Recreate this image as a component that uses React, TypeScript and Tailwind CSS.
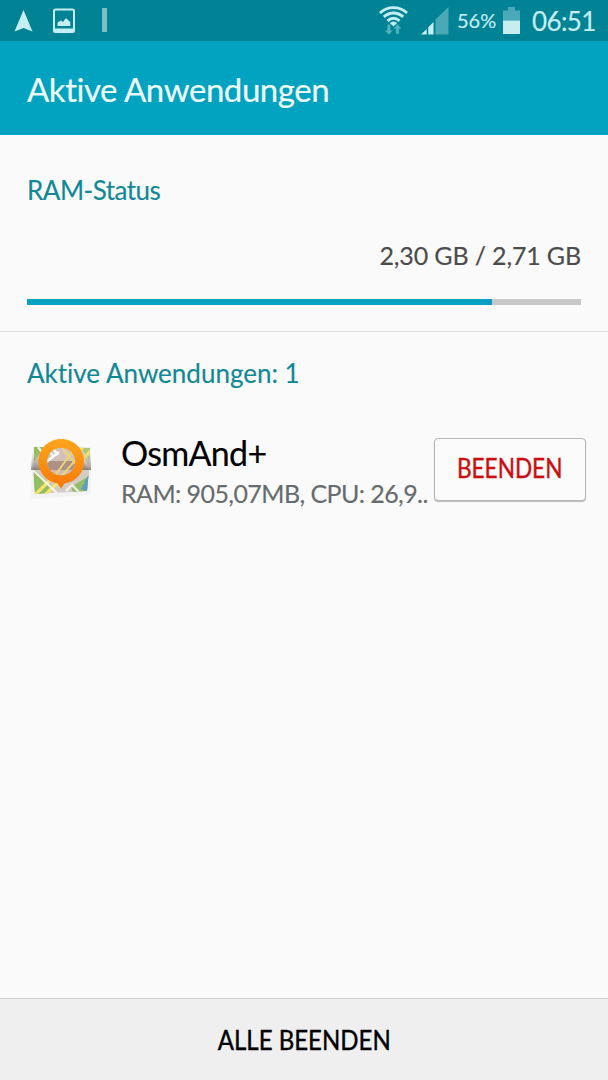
import * as React from 'react';

const WifiIcon: React.FC = () => (
  <svg width="30" height="32" viewBox="0 0 30 32" fill="none">
    <g stroke="#c5eef2" strokeWidth="2.8">
      <path d="M1 8C8.5 0.9 20.5 0.9 28 8" />
      <path d="M4.8 11.9C10.5 6.7 18.5 6.7 24.2 11.9" />
      <path d="M8.5 15.9C12.3 12.5 16.7 12.5 20.5 15.9" />
    </g>
    <path d="M10.8 18C13.2 15.9 15.8 15.9 18.2 18L14.5 21.5Z" fill="#c5eef2" />
    <path d="M8.4 19.5h3v6h2.3L9.9 29.8 6 25.5h2.4zM16.9 28.7h3.2v-5h2.3L18.5 19l-3.9 4.7h2.3z" fill="#4fb0bd" />
  </svg>
);

const SignalIcon: React.FC = () => (
  <svg width="28" height="28" viewBox="0 0 28 28">
    <path d="M14.5 12.5L27.5 0V27.5H14.5z" fill="#4aa9b7" />
    <path d="M0 27.5L5.7 22V27.5zM7.3 20.3L12.5 15V27.5H7.3z" fill="#c5eef2" />
  </svg>
);

const BatteryIcon: React.FC = () => (
  <svg width="18" height="28" viewBox="0 0 18 28">
    <path d="M5 0h7v3.5h5v10H0v-10h5z" fill="#4aa9b7" />
    <path d="M0 13.5h17V27H0z" fill="#c8edef" />
  </svg>
);

const AppIcon: React.FC = () => (
  <svg width="64" height="64" viewBox="0 0 64 64">
    <defs>
      <linearGradient id="pin" x1="0" y1="0" x2="0" y2="1">
        <stop offset="0" stopColor="#ffa51c" />
        <stop offset="1" stopColor="#f67808" />
      </linearGradient>
      <linearGradient id="fold" x1="0" y1="0" x2="0" y2="1">
        <stop offset="0" stopColor="#d9cfc8" stopOpacity="0" />
        <stop offset="1" stopColor="#766b65" stopOpacity="0.8" />
      </linearGradient>
      <clipPath id="sheet">
        <path d="M4 10L60 11 59 33 57 54 5 57 3 34z" />
      </clipPath>
      <clipPath id="hole">
        <ellipse cx="31.2" cy="24.5" rx="14" ry="13.8" />
      </clipPath>
    </defs>
    <path d="M3 9L61 10 61 34 61 58 1 62 2 33z" fill="#f3f3f1" />
    <g clipPath="url(#sheet)">
      <path d="M0 8h64v52H0z" fill="#d3cbc4" />
      <path d="M4 10h10L4 25zM4 32l18 17-8 8H4zM41 50l18-11v17l-15 1z" fill="#93bd62" />
      <path d="M51 52l8-15v18z" fill="#5d9ccb" />
      <path d="M51 10h10v17z" fill="#a9c77a" />
      <path d="M3 60L56 7M15 58L63 12" stroke="#f4e36c" strokeWidth="3.4" />
      <path d="M3 33l25 24M36 54l6-6 9 9M8 10l12 16M42 8l18 24" stroke="#f5f3ee" strokeWidth="2.2" fill="none" />
    </g>
    <path d="M2 15h59v18H1z" fill="url(#fold)" />
    <path
      d="M31.2 2C18.5 2 8.5 12 8.5 24.3 8.5 36.5 17 45 27.5 46.5L31.2 51.5 34.5 46.5C46 45 54 36 54 24.3 54 12 44 2 31.2 2z"
      fill="url(#pin)"
    />
    <g clipPath="url(#hole)">
      <path d="M16 10h31v30H16z" fill="#d3c1b9" />
      <path d="M16 24h31v9H16z" fill="#ad9288" />
      <path d="M16 33h31v7H16z" fill="#d2b9b1" />
      <path d="M24 40L44 12M30 41L49 19M32 11l17 20" stroke="#edd96b" strokeWidth="1.8" />
      <path d="M15 26l14-11M23 12l5 6M19 14l5 6" stroke="#fff" strokeWidth="2.4" />
    </g>
  </svg>
);

const StatusBar: React.FC = () => (
  <div className="flex h-[41px] items-center bg-[#028395] text-[#c5eef2]">
    <svg className="ml-3.5" width="19" height="24" viewBox="0 0 19 24">
      <path d="M9.5 1L18.5 22.5 9.5 19 0.5 22.5z" fill="#c5eef2" />
    </svg>
    <svg className="ml-5" width="22" height="26" viewBox="0 0 22 26">
      <rect x="1" y="1.5" width="20" height="22.5" rx="1.5" stroke="#c5eef2" strokeWidth="2" fill="none" />
      <path d="M1 20.5h20v3.5H1zM4.5 18v-3.5l3.5-2 2 1.5 3-4 2 2 2.3 2V18z" fill="#c5eef2" />
    </svg>
    <div className="mb-0.5 ml-[27px] h-6 w-[5px] bg-[#80bcc5]" />
    <div className="ml-auto flex h-full items-center">
      <WifiIcon />
      <div className="ml-3"><SignalIcon /></div>
      <span className="mb-0.5 ml-2 w-[46px] text-[20px]">56%</span>
      <BatteryIcon />
      <span className="mt-0.5 ml-[11px] w-[76px] text-[26px] tracking-[-0.6px]">06:51</span>
    </div>
  </div>
);

interface RunningApp {
  name: string;
  usage: string;
}

const AppRow: React.FC<{ app: RunningApp }> = ({ app }) => (
  <div className="flex h-[82px] items-center pr-[22px] pl-[30px]">
    <AppIcon />
    <div className="mt-2 ml-[27px] w-[313px] whitespace-nowrap">
      <p className="text-[34px] leading-10 tracking-[-0.7px] text-black">{app.name}</p>
      <p className="text-[25px] leading-10 tracking-[-0.58px] text-[#666b6e]">{app.usage}</p>
    </div>
    <button className="h-[63px] w-[152px] rounded border border-[#b5b5b5] bg-[#fbfbfb] pb-0.5 text-[26px] text-[#c90f10] shadow-[0_1px_1px_#bbb]">
      <span className="inline-block scale-x-[.87] [-webkit-text-stroke:0.4px]">BEENDEN</span>
    </button>
  </div>
);

export default function App() {
  const app: RunningApp = { name: 'OsmAnd+', usage: 'RAM: 905,07MB, CPU: 26,9..' };

  return (
    <div className="flex h-[1080px] w-[608px] flex-col overflow-hidden bg-[#fafafa] font-['Lato',sans-serif] [-webkit-text-stroke:0.15px] [font-variant-ligatures:none]">
      <StatusBar />
      <header className="flex h-[94px] items-center bg-[#02a3c1] pt-1 pl-[27px]">
        <h1 className="text-[33px] tracking-[-0.45px] text-[#f0fdff]">Aktive Anwendungen</h1>
      </header>

      <section className="h-[197px] border-b border-[#dedede] px-[27px] pt-[35px]">
        <h2 className="text-[26px] leading-10 tracking-[-0.5px] text-[#118897]">RAM-Status</h2>
        <p className="mt-[25px] text-right text-[25px] leading-10 tracking-[-0.15px] text-[#4c4c4c]">2,30 GB / 2,71 GB</p>
        <div className="mt-6 h-1.5 bg-[#c8c8c8]">
          <div className="h-full w-[84%] bg-[#0aa0c2]" />
        </div>
      </section>

      <main className="grow">
        <h2 className="pt-[21px] pl-[27px] text-[26px] leading-10 text-[#118897]">Aktive Anwendungen: 1</h2>
        <div className="mt-[35px]">
          <AppRow app={app} />
        </div>
      </main>

      <footer className="flex h-[82px] items-center justify-center border-t border-[#d0d0d0] bg-[#efefef] pt-0.5">
        <button className="scale-x-[.89] text-[27px] text-black [-webkit-text-stroke:0.4px]">ALLE BEENDEN</button>
      </footer>
    </div>
  );
}
